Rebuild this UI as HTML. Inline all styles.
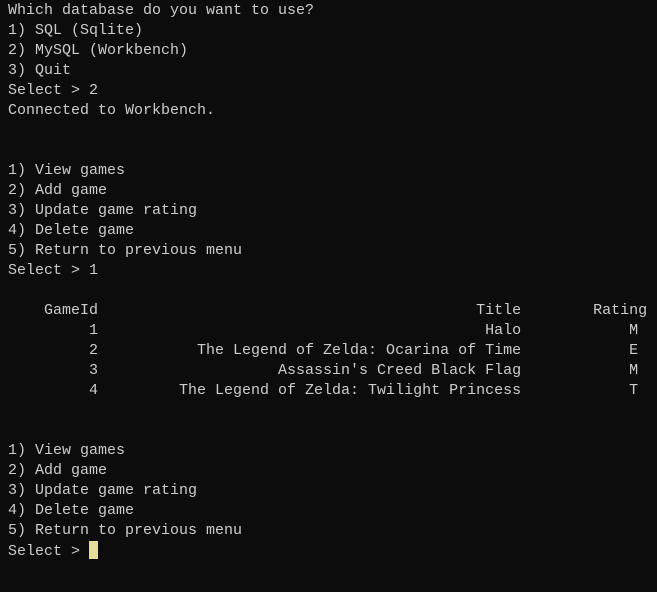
<!DOCTYPE html><html><head><style>
html,body{margin:0;padding:0;background:#0c0c0c;width:657px;height:592px;overflow:hidden}
pre{margin:0;padding:1px 0 0 8px;font-family:"Liberation Mono",monospace;font-size:15px;line-height:20px;color:#cccccc}
.c{display:inline-block;width:9px;height:18px;background:#e6dc9e;vertical-align:-4px}
</style></head><body><pre>Which database do you want to use?
1) SQL (Sqlite)
2) MySQL (Workbench)
3) Quit
Select &gt; 2
Connected to Workbench.


1) View games
2) Add game
3) Update game rating
4) Delete game
5) Return to previous menu
Select &gt; 1

    GameId                                          Title        Rating
         1                                           Halo            M
         2           The Legend of Zelda: Ocarina of Time            E
         3                    Assassin's Creed Black Flag            M
         4         The Legend of Zelda: Twilight Princess            T


1) View games
2) Add game
3) Update game rating
4) Delete game
5) Return to previous menu
Select &gt; <span class="c"></span></pre></body></html>
